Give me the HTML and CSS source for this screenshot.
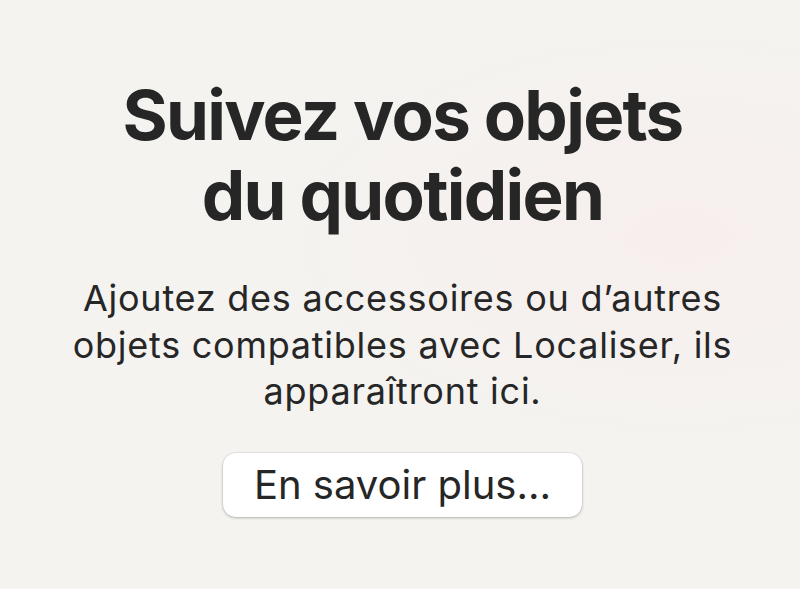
FILE: index.html
```
<!DOCTYPE html>
<html lang="fr">
<head>
<meta charset="utf-8">
<link rel="stylesheet" href="styles.css">
</head>
<body>
<main class="empty">
  <h1 class="title">Suivez vos objets<br>du quotidien</h1>
  <p class="desc">Ajoutez des accessoires ou d’autres objets compatibles avec Localiser, ils apparaîtront ici.</p>
  <button class="btn">En savoir plus…</button>
</main>
</body>
</html>
```
FILE: styles.css
```
html, body {
  margin: 0;
  padding: 0;
  height: 100%;
}
body {
  background: radial-gradient(ellipse at 85% 40%, #f7efed 0%, #f4f3f0 45%, #f4f3f0 100%);
  font-family: Inter, "Noto Sans", sans-serif;
  color: #262626;
  overflow: hidden;
}
.empty {
  display: flex;
  flex-direction: column;
  align-items: center;
  text-align: center;
  padding: 75px 0 0 5px;
}
.title {
  margin: 0;
  font-size: 69px;
  line-height: 80px;
  font-weight: 700;
  letter-spacing: -1.7px;
}
.desc {
  margin: 40px 0 0;
  width: 700px;
  font-size: 36px;
  line-height: 46.5px;
  font-weight: 400;
  letter-spacing: 0.75px;
}
.btn {
  margin-top: 38px;
  width: 359px;
  height: 64px;
  border: none;
  border-radius: 13px;
  background: #ffffff;
  box-shadow: 0 1px 3px rgba(0,0,0,0.25), 0 0 0 0.5px rgba(0,0,0,0.08);
  font-family: inherit;
  font-size: 40px;
  color: #262626;
  padding: 0;
}
```
